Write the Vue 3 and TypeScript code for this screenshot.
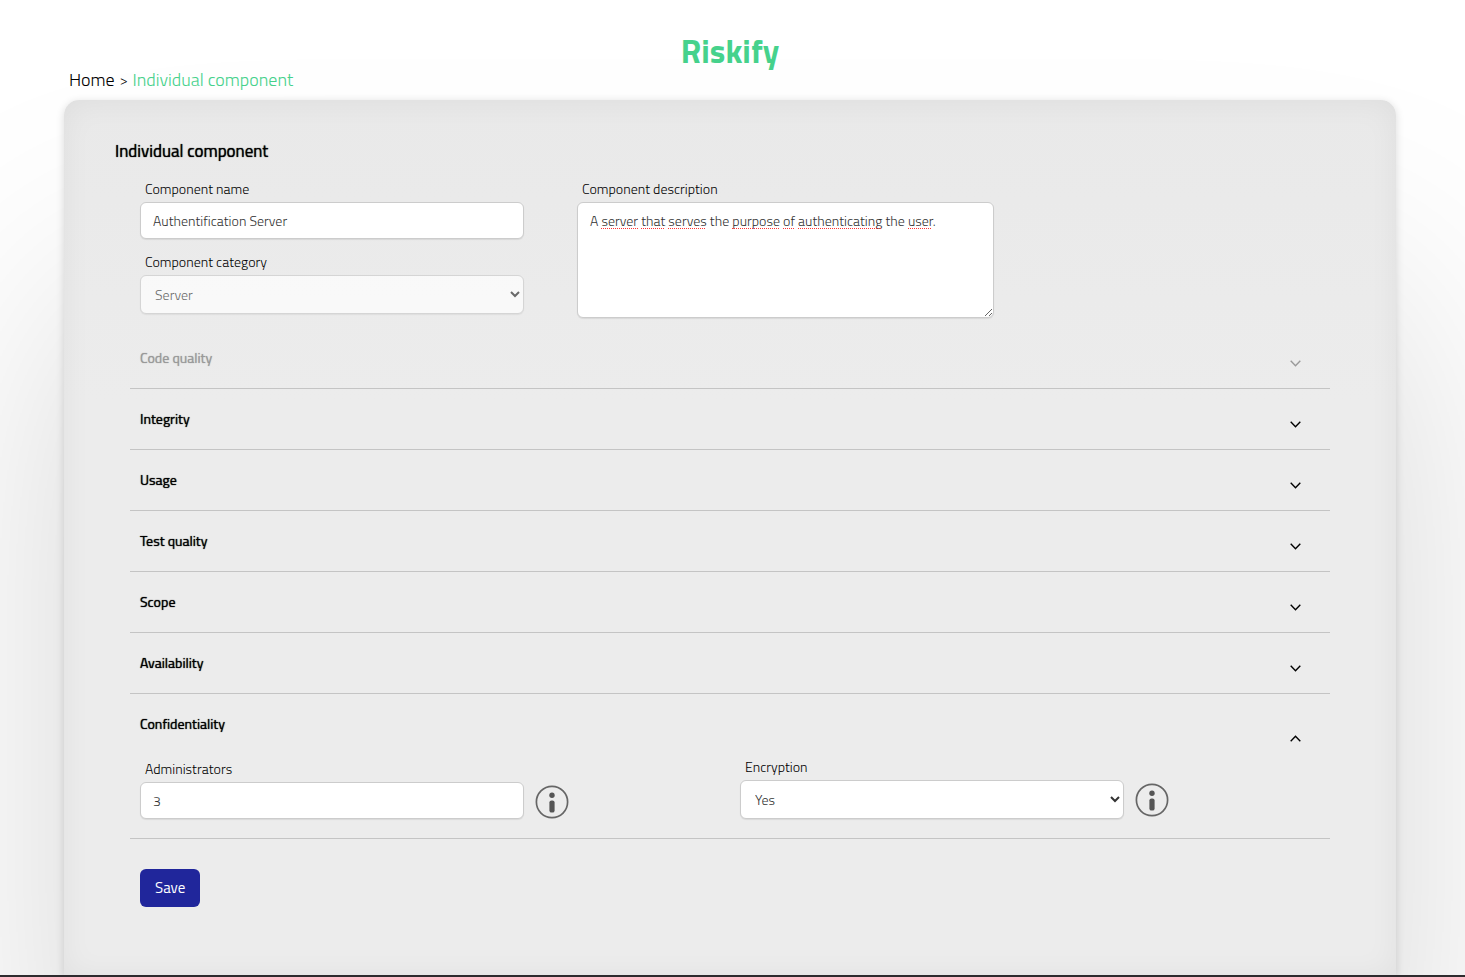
<script setup lang="ts">
import { computed, ref } from 'vue'

interface Section {
  title: string
  disabled?: boolean
}

interface Piece {
  text: string
  flagged: boolean
}

const name = ref('Authentification Server')
const category = ref('Server')
const description = ref('A server that serves the purpose of authenticating the user.')
const administrators = ref('3')
const encryption = ref('Yes')
const openSection = ref('Confidentiality')

const sections: Section[] = [
  { title: 'Code quality', disabled: true },
  { title: 'Integrity' },
  { title: 'Usage' },
  { title: 'Test quality' },
  { title: 'Scope' },
  { title: 'Availability' },
  { title: 'Confidentiality' },
]

const unknownWords = ['server', 'that', 'serves', 'purpose', 'of', 'authenticating', 'user']

const pieces = computed<Piece[]>(() =>
  description.value
    .split(/(\w+)/)
    .filter((text) => text !== '')
    .map((text) => ({ text, flagged: unknownWords.includes(text) })),
)

function toggle(title: string): void {
  openSection.value = openSection.value === title ? '' : title
}
</script>

<template>
  <div class="page">
    <header>
      <h1>Riskify</h1>
      <nav class="crumbs" aria-label="Breadcrumb">
        <a href="#home">Home</a>
        <span class="sep">&gt;</span>
        <a href="#component" class="current" aria-current="page">Individual component</a>
      </nav>
    </header>

    <main class="card">
      <form class="content" @submit.prevent>
        <h2>Individual component</h2>

        <div class="details">
          <div class="stack">
            <div class="field">
              <label for="name">Component name</label>
              <input id="name" v-model="name" type="text" />
            </div>
            <div class="field">
              <label for="category">Component category</label>
              <select id="category" v-model="category" disabled>
                <option>Server</option>
              </select>
            </div>
          </div>
          <div class="field wide">
            <label for="description">Component description</label>
            <div class="editor">
              <textarea id="description" v-model="description" spellcheck="false"></textarea>
              <div class="marks" aria-hidden="true"><span v-for="(p, i) in pieces" :key="i" :class="{ flagged: p.flagged }">{{ p.text }}</span></div>
            </div>
          </div>
        </div>

        <section v-for="s in sections" :key="s.title" class="section">
          <button
            type="button"
            class="toggle"
            :class="{ open: openSection === s.title }"
            :disabled="s.disabled"
            :aria-expanded="openSection === s.title"
            @click="toggle(s.title)"
          >
            <span>{{ s.title }}</span>
            <svg class="chevron" width="11" height="7" viewBox="0 0 11 7" aria-hidden="true">
              <path v-if="openSection === s.title" d="M0.7 6.2 L5.5 1.3 L10.3 6.2" />
              <path v-else d="M0.7 0.8 L5.5 5.7 L10.3 0.8" />
            </svg>
          </button>

          <div v-if="s.title === 'Confidentiality' && openSection === s.title" class="body">
            <div class="cell">
              <div class="field">
                <label for="admins">Administrators</label>
                <input id="admins" v-model="administrators" type="text" inputmode="numeric" />
              </div>
              <button type="button" class="info" aria-label="About administrators">
                <svg width="34" height="34" viewBox="0 0 34 34" aria-hidden="true">
                  <circle class="ring" cx="17" cy="17" r="15.6" />
                  <circle cx="17" cy="10.2" r="2.7" />
                  <rect x="14.4" y="15.4" width="5.2" height="12.2" rx="2.2" />
                </svg>
              </button>
            </div>
            <div class="cell">
              <div class="field">
                <label for="encryption">Encryption</label>
                <select id="encryption" v-model="encryption">
                  <option>Yes</option>
                  <option>No</option>
                </select>
              </div>
              <button type="button" class="info raised" aria-label="About encryption">
                <svg width="34" height="34" viewBox="0 0 34 34" aria-hidden="true">
                  <circle class="ring" cx="17" cy="17" r="15.6" />
                  <circle cx="17" cy="10.2" r="2.7" />
                  <rect x="14.4" y="15.4" width="5.2" height="12.2" rx="2.2" />
                </svg>
              </button>
            </div>
          </div>
        </section>

        <button type="submit" class="save">Save</button>
      </form>
    </main>
  </div>
</template>

<style>
body {
  margin: 0;
  background: #fff;
}
</style>

<style scoped>
.page {
  box-sizing: border-box;
  display: flex;
  flex-direction: column;
  min-height: 100vh;
  padding: 34px 69px 0 64px;
  overflow: hidden;
  border-bottom: 2px solid #2e2b2e;
  color: #000;
  font-family: 'Titillium Web', Roboto, 'Open Sans', sans-serif;
  font-size: 14px;
  font-weight: 300;
  line-height: 20px;
}

h1 {
  margin: 0;
  color: #46d28c;
  font-size: 33px;
  font-weight: 700;
  line-height: 34px;
  text-align: center;
}

.crumbs {
  display: flex;
  gap: 5px;
  align-items: center;
  padding: 2px 5px 10px;
  font-size: 18px;
}

.crumbs a {
  color: #000;
  text-decoration: none;
}

.crumbs .current {
  color: #46d28c;
}

.sep {
  font-size: 14px;
}

.card {
  flex: 1;
  padding: 38px 0 68px;
  border-radius: 15px 15px 0 0;
  background: linear-gradient(#e9e9e9, #ececec 300px);
  box-shadow:
    0 2px 8px rgba(0, 0, 0, 0.14),
    0 200px 250px rgba(0, 0, 0, 0.17),
    inset 0 2px 30px rgba(0, 0, 0, 0.05);
}

.content {
  max-width: 1200px;
  margin: 0 auto;
}

h2 {
  margin: 0 0 15px -15px;
  font-size: 17px;
  font-weight: 400;
  line-height: 26px;
  text-shadow: 0 0 1px currentColor;
}

.details {
  display: flex;
  gap: 53px;
  padding: 0 10px 10px;
}

.stack {
  display: flex;
  flex-direction: column;
  gap: 13px;
}

.field {
  display: flex;
  flex-direction: column;
  gap: 3px;
  width: 384px;
}

.field.wide {
  width: 417px;
}

label {
  padding-left: 5px;
}

input,
select,
textarea {
  box-sizing: border-box;
  width: 100%;
  margin: 0;
  border: 1px solid #ccc;
  border-radius: 6px;
  background: #fff;
  box-shadow: 0 1px 1px rgba(0, 0, 0, 0.08);
  color: #333;
  font: inherit;
}

input {
  height: 37px;
  padding: 0 12px;
}

select {
  height: 39px;
  padding: 0 10px;
}

select:disabled {
  opacity: 0.7;
}

.editor {
  position: relative;
}

textarea {
  display: block;
  height: 116px;
  padding: 8px 12px;
  resize: both;
}

.marks {
  position: absolute;
  inset: 0;
  padding: 9px 13px;
  color: transparent;
  pointer-events: none;
  white-space: pre-wrap;
}

.flagged {
  text-decoration: underline dotted #f33 1px;
  text-decoration-skip-ink: none;
  text-underline-offset: 2px;
}

.section {
  border-bottom: 1px solid #c4c4c4;
}

button {
  border: 0;
  font: inherit;
  cursor: pointer;
}

.toggle {
  display: flex;
  align-items: center;
  justify-content: space-between;
  width: 100%;
  height: 60px;
  padding: 0 29px 0 10px;
  background: none;
  color: #000;
  font-weight: 400;
  text-shadow: 0 0 1px currentColor;
}

.toggle:disabled {
  color: #999;
  cursor: default;
}

.chevron {
  margin-top: 10px;
  fill: none;
  stroke: currentColor;
  stroke-width: 1.4;
}

.open .chevron {
  margin-top: 28px;
}

.body {
  display: grid;
  grid-template-columns: 1fr 1fr;
  align-items: end;
  padding: 3px 0 19px;
}

.cell {
  display: flex;
  gap: 11px;
  align-items: flex-end;
  padding-left: 10px;
}

.info {
  display: block;
  height: 34px;
  padding: 0;
  background: none;
}

.info.raised {
  margin-bottom: 2px;
}

.info svg {
  display: block;
  fill: #555;
}

.info .ring {
  fill: none;
  stroke: #666;
  stroke-width: 1.7;
}

.save {
  margin: 30px 0 0 10px;
  padding: 9px 15px;
  border-radius: 6px;
  background: #20269b;
  color: #fff;
  font-size: 15px;
  font-weight: 400;
}
</style>
